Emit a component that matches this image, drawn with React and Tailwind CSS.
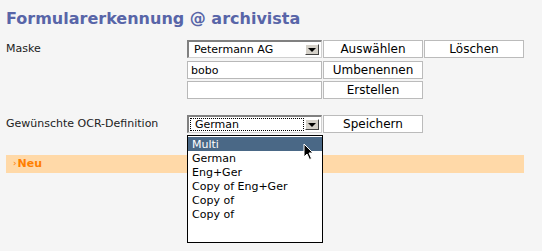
import React from "react";

function Arrow() {
  return (
    <div className="absolute right-[2px] top-[2px] bottom-[2px] w-[14px] bg-[#d4d0c8] border-t border-l border-t-white border-l-white border-r border-b border-r-[#404040] border-b-[#404040] flex items-center justify-center">
      <div className="w-0 h-0 border-l-[4px] border-r-[4px] border-t-[4px] border-l-transparent border-r-transparent border-t-black" />
    </div>
  );
}

function Select({ value, focused }) {
  return (
    <div className="relative w-[135px] h-[18px] bg-white border-t-2 border-l-2 border-t-[#808080] border-l-[#808080] border-b border-r border-b-[#d0d0d0] border-r-[#d0d0d0]">
      <div className={"absolute left-[1px] top-[1px] bottom-[1px] right-[17px] flex items-center pl-[4px] " + (focused ? "border border-dotted border-black" : "")}>
        <span className="text-[11px] leading-none text-black">{value}</span>
      </div>
      <Arrow />
    </div>
  );
}

function Btn({ children }) {
  return (
    <div className="w-[100px] h-[18px] bg-white border border-[#bbbbbb] flex items-center justify-center text-[12px] leading-none text-black">
      {children}
    </div>
  );
}

function Input({ value }) {
  return (
    <div className="w-[135px] h-[18px] bg-white border border-[#b8b8b8] flex items-center pl-[3px] text-[11px] leading-none text-black">
      {value}
    </div>
  );
}

export default function App() {
  const items = ["Multi", "German", "Eng+Ger", "Copy of Eng+Ger", "Copy of", "Copy of"];
  return (
    <div className="relative w-[542px] h-[251px] bg-[#f5f5f5] overflow-hidden" style={{ fontFamily: '"DejaVu Sans", sans-serif' }}>
      <div className="pl-[6px] pt-[9px]">
        <h1 className="text-[16px] font-bold leading-[20px] text-[#5865a8]">Formularerkennung @ archivista</h1>
        <div className="mt-[11px] flex">
          <div className="w-[181px] text-[11px] leading-[18px] text-[#222]">Maske</div>
          <div className="flex flex-col gap-[2px]">
            <div className="flex gap-[1px]">
              <Select value="Petermann AG" />
              <Btn>Auswählen</Btn>
              <Btn>Löschen</Btn>
            </div>
            <div className="flex gap-[1px] mt-[1px]">
              <Input value="bobo" />
              <Btn>Umbenennen</Btn>
            </div>
            <div className="flex gap-[1px]">
              <Input value="" />
              <Btn>Erstellen</Btn>
            </div>
          </div>
        </div>
        <div className="mt-[16px] flex">
          <div className="w-[181px] text-[11px] leading-[18px] text-[#222]">Gewünschte OCR-Definition</div>
          <div className="flex gap-[1px]">
            <Select value="German" focused />
            <Btn>Speichern</Btn>
          </div>
        </div>
        <div className="mt-[22px] w-[518px] h-[18px] bg-[#ffd9a8] flex items-center pl-[7px] text-[11px] font-bold text-[#ff7f00]">
          <span className="text-[9px] font-normal mr-[1px]">›</span>Neu
        </div>
      </div>
      <div className="absolute left-[187px] top-[135px] w-[136px] h-[108px] bg-white border border-black pt-[1px]">
        {items.map((t, i) => (
          <div key={i} className={"h-[14px] flex items-center pl-[4px] text-[11px] leading-none " + (i === 0 ? "bg-[#4a6886] text-white" : "text-black")}>
            {t}
          </div>
        ))}
      </div>
      <svg className="absolute left-[303px] top-[143px]" width="12" height="18" viewBox="0 0 12 18">
        <path d="M1 1 L1 14 L4 11 L6.5 16.5 L8.5 15.5 L6 10 L10 10 Z" fill="black" stroke="white" strokeWidth="1" />
      </svg>
    </div>
  );
}
